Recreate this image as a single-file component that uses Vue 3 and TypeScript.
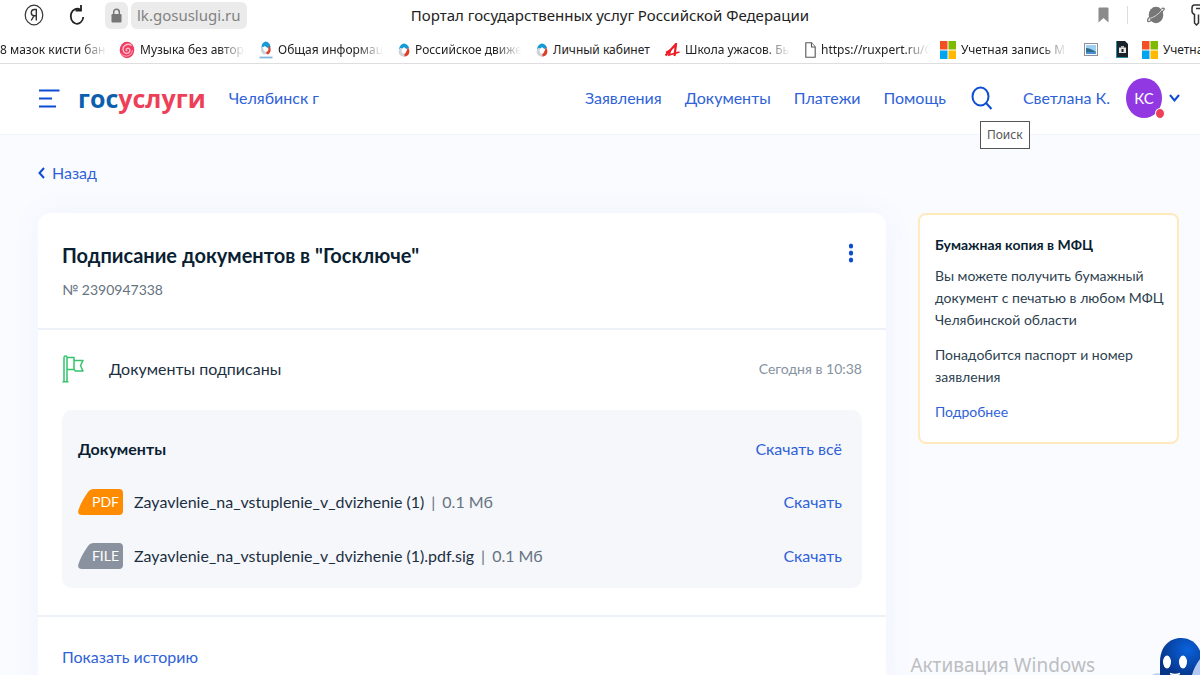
<script setup lang="ts">
interface Bookmark { id: string; icon: string; title: string; width: string; fade: boolean }
interface DocFile { kind: string; name: string; size: string; color: string }

const bookmarks: Bookmark[] = [
  { id: 'b1', icon: '', title: '8 мазок кисти бан', width: 'w1', fade: true },
  { id: 'b2', icon: 'swirl', title: 'Музыка без автор', width: 'w2', fade: true },
  { id: 'b3', icon: 'move', title: 'Общая информац', width: 'w3', fade: true },
  { id: 'b4', icon: 'drop', title: 'Российское движе', width: 'w4', fade: true },
  { id: 'b5', icon: 'drop', title: 'Личный кабинет', width: 'w5', fade: false },
  { id: 'b6', icon: 'four', title: 'Школа ужасов. Бы', width: 'w6', fade: true },
  { id: 'b7', icon: 'page', title: 'https://ruxpert.ru/С', width: 'w7', fade: true },
  { id: 'b8', icon: 'ms', title: 'Учетная запись M', width: 'w8', fade: true },
  { id: 'b9', icon: 'photo', title: '', width: 'w9', fade: false },
  { id: 'b10', icon: 'disk', title: '', width: 'w10', fade: false },
  { id: 'b11', icon: 'ms', title: 'Учетна', width: 'w11', fade: false },
]

const nav: string[] = ['Заявления', 'Документы', 'Платежи', 'Помощь']

const files: DocFile[] = [
  { kind: 'PDF', name: 'Zayavlenie_na_vstuplenie_v_dvizhenie (1)', size: '0.1 Мб', color: '#ff8c00' },
  { kind: 'FILE', name: 'Zayavlenie_na_vstuplenie_v_dvizhenie (1).pdf.sig', size: '0.1 Мб', color: '#8a929f' },
]
</script>

<template>
  <div class="page">
    <header class="browser">
      <div class="toolbar">
        <div class="tools-left">
          <button class="icon-btn ya" aria-label="Яндекс">
            <svg width="20" height="22" viewBox="0 0 20 22" fill="none" stroke="#333">
              <ellipse cx="10" cy="11" rx="8.800" ry="9.800" stroke-width="1.200" />
              <path d="M12.300 16.500V5.500H10.500C8.300 5.500 7.300 7 7.300 8.700C7.300 10.600 8.500 11.800 10.300 11.800H12.300M10 11.800L7.200 16.500" stroke-width="1.400" />
            </svg>
          </button>
          <button class="icon-btn reload" aria-label="Обновить">
            <svg width="16" height="22" viewBox="0 0 16 22" fill="none" stroke="#222" stroke-width="1.800">
              <path d="M11.500 6A6.300 7.500 0 1 0 14.300 13" />
              <path d="M6.500 6.500H12V1" />
            </svg>
          </button>
          <button class="lock" aria-label="Защищённое соединение">
            <svg width="11" height="15" viewBox="0 0 11 15">
              <path d="M2.700 7V4.200a2.800 3 0 0 1 5.600 0V7" fill="none" stroke="#777" stroke-width="1.500" />
              <rect x="0.500" y="6" width="10" height="8.500" rx="1.200" fill="#777" />
            </svg>
          </button>
          <a class="address" href="#">lk.gosuslugi.ru</a>
        </div>
        <div class="tab-title">Портал государственных услуг Российской Федерации</div>
        <div class="tools-right">
          <button class="icon-btn mark" aria-label="В закладки">
            <svg width="11" height="16" viewBox="0 0 11 16"><path d="M0.500 1.500Q0.500 0.500 1.500 0.500H9.500Q10.500 0.500 10.500 1.500V15.500L5.500 11L0.500 15.500Z" fill="#8b8b8b" /></svg>
          </button>
          <span class="rule"></span>
          <button class="icon-btn planet" aria-label="Расширение">
            <svg width="18" height="18" viewBox="0 0 18 18">
              <ellipse cx="9" cy="9" rx="7.300" ry="8.300" fill="#777" />
              <path d="M2 11.500C-0.500 15 0.500 16.200 3 15.200C8 13 14.500 7.500 17 3.500C17.600 2.300 16.500 1.800 14.500 2.600" fill="none" stroke="#777" stroke-width="1.300" />
              <path d="M2.300 12.600C7 11.500 12 8 15 3.800" fill="none" stroke="#d5d5d5" stroke-width="1" />
            </svg>
          </button>
          <button class="icon-btn key" aria-label="Пароли">
            <svg width="9" height="22" viewBox="0 0 9 22" fill="none" stroke="#333" stroke-width="1.500">
              <path d="M9 1H3.500Q1 1 1 4V7Q1 9.500 3.500 10.500V19L5.500 21L7.500 19V10.500" /><path d="M5 4.500H9" />
            </svg>
          </button>
        </div>
      </div>
      <nav class="bookmarks" aria-label="Закладки">
        <a v-for="b in bookmarks" :key="b.id" href="#" class="bookmark" :class="b.width" :aria-label="b.title || b.icon">
          <svg v-if="b.icon === 'swirl'" width="16" height="18" viewBox="0 0 16 18">
            <ellipse cx="8" cy="9" rx="7.300" ry="8.300" fill="#ee3c64" />
            <path d="M12.500 4.500C9 1.800 4 4 4 8.500C4 12 8 13.500 10 11.500C12 9.500 10.500 6.500 8.300 7.300C6.500 8 7 10 8.300 9.800" fill="none" stroke="#ffc3cb" stroke-width="1.300" />
            <path d="M2 12.500C5 17 13 15.500 13.500 9" fill="none" stroke="#ff8f9f" stroke-width="1.200" />
          </svg>
          <svg v-else-if="b.icon === 'move'" width="14" height="18" viewBox="0 0 14 18">
            <path d="M2.500 7Q2 2 6.500 0.500Q11 1 11.500 6L9 8L6 5Z" fill="#189bd7" />
            <path d="M10.500 4Q13.500 11 9 13.500L5.500 12L9 9Z" fill="#d94732" />
            <path d="M3 5Q0 11 5 13.500L8 12L5 9Z" fill="#ccd3db" />
            <circle cx="7" cy="8.500" r="2.300" fill="#fff" />
            <path d="M0.500 16.500H13.500" stroke="#80b8e0" stroke-width="1.800" />
          </svg>
          <svg v-else-if="b.icon === 'drop'" width="12" height="14" viewBox="0 0 12 14">
            <path d="M1 6Q2 1 6 0.500Q10 1 11 5L8 6L6 4L3 7Z" fill="#149bd7" />
            <path d="M10 4Q13 10 9.500 12.500Q7 14 5 13L6.500 10L8.500 8Z" fill="#df3e25" />
            <path d="M2 5Q-1 10 2.500 12.500Q4 13.800 6.500 13L6.500 10L3.500 8L4 5Z" fill="#cfd2d8" />
            <ellipse cx="6" cy="7.800" rx="2.300" ry="2.800" fill="#fff" />
          </svg>
          <svg v-else-if="b.icon === 'four'" width="15" height="14" viewBox="0 0 15 14" fill="none" stroke="#ed1c24">
            <path d="M0.500 12.500L11 1L9.500 13" stroke-width="2.200" /><path d="M1 9.500L5.500 7L4 12L14.500 9" stroke-width="1.800" />
          </svg>
          <svg v-else-if="b.icon === 'page'" width="11" height="16" viewBox="0 0 11 16" fill="#fff" stroke="#555" stroke-width="1.100">
            <path d="M0.800 0.800H6.500L10.200 5V15.200H0.800Z" /><path d="M6.500 0.800V5H10.200" />
          </svg>
          <svg v-else-if="b.icon === 'ms'" width="16" height="18" viewBox="0 0 16 18">
            <rect width="7.500" height="8.500" fill="#f25022" /><rect x="8.500" width="7.500" height="8.500" fill="#7fba00" />
            <rect y="9.500" width="7.500" height="8.500" fill="#00a4ef" /><rect x="8.500" y="9.500" width="7.500" height="8.500" fill="#ffb900" />
          </svg>
          <svg v-else-if="b.icon === 'photo'" width="14" height="13" viewBox="0 0 14 13">
            <rect x="0.500" y="0.500" width="13" height="12" fill="#fff" stroke="#8b9198" />
            <rect x="2" y="2" width="10" height="9" fill="#9fd0f2" /><path d="M2 5Q6 5 12 9V10H2Z" fill="#2d6c8f" /><path d="M2 9H12V11H2Z" fill="#4a8fd0" />
          </svg>
          <svg v-else-if="b.icon === 'disk'" width="12" height="17" viewBox="0 0 12 17">
            <path d="M0 0H9L12 3V17H0Z" fill="#1d2429" /><path d="M0 0H1V16H12V17H0Z" fill="#2a8ba5" />
            <rect x="3" y="6.500" width="7" height="5.500" fill="#e6e6e6" /><rect x="5" y="5" width="3" height="2" fill="#bbb" /><rect x="5.500" y="8" width="2" height="3" fill="#222" />
          </svg>
          <span v-if="b.title" class="bm-title" :class="{ fade: b.fade }">{{ b.title }}</span>
        </a>
      </nav>
    </header>

    <header class="site">
      <button class="icon-btn burger" aria-label="Меню">
        <svg width="21" height="19" viewBox="0 0 21 19" stroke="#0d4cd3" stroke-width="2"><path d="M0 1.500H20.500M0 9.500H13M0 17.500H17" /></svg>
      </button>
      <a class="logo" href="#"><span class="logo-blue">гос</span><span class="logo-red">услуги</span></a>
      <a class="city" href="#">Челябинск г</a>
      <nav class="menu" aria-label="Разделы">
        <a v-for="item in nav" :key="item" href="#">{{ item }}</a>
      </nav>
      <div class="search">
        <button class="icon-btn" aria-label="Поиск">
          <svg width="22" height="24" viewBox="0 0 22 24" fill="none" stroke="#0d4cd3" stroke-width="2">
            <ellipse cx="9.500" cy="10.500" rx="8" ry="9" /><path d="M15 17L20.500 23" />
          </svg>
        </button>
        <span class="tooltip" role="tooltip">Поиск</span>
      </div>
      <a class="user" href="#">Светлана К.</a>
      <button class="profile" aria-label="Профиль">
        <span class="avatar">КС<span class="dot"></span></span>
        <svg width="11" height="8" viewBox="0 0 11 8" fill="none" stroke="#0d4cd3" stroke-width="2"><path d="M1 1L5.500 6.500L10 1" /></svg>
      </button>
    </header>

    <main class="content">
      <a class="back" href="#">
        <svg width="7" height="12" viewBox="0 0 7 12" fill="none" stroke="#0d4cd3" stroke-width="2"><path d="M6 1L1.500 6L6 11" /></svg>
        Назад
      </a>
      <div class="columns">
        <section class="card">
          <div class="card-head">
            <div>
              <h1>Подписание документов в "Госключе"</h1>
              <p class="number">№ 2390947338</p>
            </div>
            <button class="icon-btn more" aria-label="Действия">
              <svg width="6" height="20" viewBox="0 0 6 20" fill="#0d4cd3"><ellipse cx="3" cy="3" rx="2.200" ry="2.500" /><ellipse cx="3" cy="10" rx="2.200" ry="2.500" /><ellipse cx="3" cy="17" rx="2.200" ry="2.500" /></svg>
            </button>
          </div>
          <div class="card-body">
            <div class="status">
              <svg width="22" height="28" viewBox="0 0 22 28" fill="none" stroke="#35c36c" stroke-width="1.500" stroke-linejoin="round">
                <path d="M2 26V2.500Q2 1 3.500 1T5 2.500V26M0.500 26.700H6.500" />
                <path d="M5 2.500H12V14.500H5M12 5.500H21L18.500 10.500L21 16H13.500L12 14.500" />
              </svg>
              <span class="status-name">Документы подписаны</span>
              <time>Сегодня в 10:38</time>
            </div>
            <div class="docs">
              <div class="docs-head"><h2>Документы</h2><a href="#">Скачать всё</a></div>
              <div v-for="f in files" :key="f.name" class="file">
                <span class="badge">
                  <svg width="45" height="26" viewBox="0 0 45 26" :fill="f.color"><path d="M10 3Q12 0 16 0H41Q45 0 45 4V22Q45 26 41 26H4Q-1 26 0.500 21Q3 13 10 3Z" /></svg>
                  <span class="badge-text">{{ f.kind }}</span>
                </span>
                <span class="file-name">{{ f.name }}</span>
                <span class="file-size"><span>|</span><span>{{ f.size }}</span></span>
                <a href="#">Скачать</a>
              </div>
            </div>
          </div>
          <div class="card-foot"><a href="#">Показать историю</a></div>
        </section>
        <aside class="note">
          <h3>Бумажная копия в МФЦ</h3>
          <p>Вы можете получить бумажный документ с печатью в любом МФЦ Челябинской области</p>
          <p>Понадобится паспорт и номер заявления</p>
          <a href="#">Подробнее</a>
        </aside>
      </div>
    </main>
    <div class="watermark">Активация Windows</div>
    <button class="robot" aria-label="Робот Макс">
      <svg width="48" height="38" viewBox="0 0 48 38">
        <defs><radialGradient id="robotSkin" cx="0.650" cy="0.300" r="0.700"><stop offset="0" stop-color="#0a62dc" /><stop offset="1" stop-color="#063488" /></radialGradient></defs>
        <path d="M0 38Q4 35 10 37V38H0Z" fill="#b9cdf3" />
        <path d="M8 40V25C8 10 17 1 29 1C41 1 50 10 50 25V40Z" fill="url(#robotSkin)" />
        <path d="M48 22Q42 30 40 38H48Z" fill="#b3c9f4" />
        <ellipse cx="15" cy="25" rx="4" ry="6.500" fill="#fff" /><ellipse cx="31" cy="25" rx="4" ry="6.500" fill="#fff" />
        <path d="M18 36.500Q23 38.500 28 36.500" stroke="#fff" stroke-width="1.500" fill="none" />
      </svg>
    </button>
  </div>
</template>

<style>
body { background: #fafbff; }
html, body { overflow: hidden; }
</style>

<style scoped>
.page { position: relative; height: 100vh; overflow: hidden; background: #fafbff; color: #0b1f33; font-family: Lato, "Open Sans", sans-serif; font-size: 16px; line-height: 24px; }
* { box-sizing: border-box; }
a { color: #2f62d9; text-decoration: none; white-space: nowrap; }
h1, h2, h3, p { margin: 0; }
svg { display: block; flex: none; }
button { border: 0; background: none; padding: 0; font: inherit; cursor: pointer; }
.icon-btn { display: flex; align-items: center; }

.browser { background: #fff; border-bottom: 1px solid #dedede; font-family: "Noto Sans", "Open Sans", sans-serif; color: #222; }
.toolbar { display: grid; grid-template-columns: 1fr auto 1fr; align-items: center; height: 30px; }
.tools-left { display: flex; align-items: center; padding-left: 24px; }
.reload { margin-left: 25px; }
.lock { display: flex; align-items: center; justify-content: center; width: 23px; height: 27px; margin-left: 20px; border-radius: 6px; background: #ebebeb; }
.address { margin-left: 3px; padding: 0 6px; height: 27px; line-height: 27px; border-radius: 6px; background: #ebebeb; color: #828282; font-size: 15px; }
.tab-title { padding-left: 20px; font-size: 15px; white-space: nowrap; }
.tools-right { display: flex; align-items: center; justify-content: flex-end; }
.rule { width: 1px; height: 18px; margin: 0 19px 0 18px; background: #ddd; }
.key { margin-left: 26px; }
.bookmarks { display: flex; align-items: center; height: 33px; padding-top: 6px; overflow: hidden; }
.bookmark { display: flex; align-items: center; gap: 5px; flex: none; color: #222; font-size: 12px; line-height: 20px; }
.bm-title { overflow: hidden; flex: 1; }
.fade { -webkit-mask-image: linear-gradient(90deg, #000 calc(100% - 26px), transparent); mask-image: linear-gradient(90deg, #000 calc(100% - 26px), transparent); }
.w1 { width: 107px; margin-right: 12px; }
.w2 { width: 126px; margin-right: 14px; }
.w3 { width: 124px; margin-right: 15px; }
.w4 { width: 123px; margin-right: 15px; }
.w5 { width: 117px; margin-right: 12px; }
.w6 { width: 125px; margin-right: 15px; }
.w7 { width: 124px; margin-right: 11px; }
.w8 { width: 127px; margin-right: 17px; }
.w9 { width: 14px; margin-right: 18px; }
.w10 { width: 12px; margin-right: 14px; }

.site { display: flex; align-items: center; height: 71px; padding: 0 20px 2px 39px; background: #fff; border-bottom: 1px solid #f1f4fb; }
.logo { margin-left: 18px; font-family: "Open Sans", sans-serif; font-weight: 700; font-size: 25px; line-height: 32px; }
.logo-blue { color: #0d5fae; }
.logo-red { color: #ee3f58; }
.city { margin-left: 23px; }
.menu { display: flex; gap: 23px; margin-left: auto; }
.search { position: relative; margin-left: 25px; }
.tooltip { position: absolute; left: 9px; top: 35px; padding: 0 6px; border: 1px solid #555; background: #fff; color: #555; font: 12px/26px "Noto Sans", sans-serif; white-space: nowrap; }
.user { margin-left: 30px; }
.profile { display: flex; align-items: center; gap: 7px; margin-left: 16px; }
.avatar { position: relative; width: 36px; height: 40px; border-radius: 50%; background: #9238e3; color: #fff; font-size: 15px; line-height: 40px; }
.dot { position: absolute; right: -3px; bottom: -1px; width: 10px; height: 11px; border: 1px solid #fff; border-radius: 50%; background: #ee3f58; }

.content { padding: 26px 21px 0 38px; }
.back { display: inline-flex; align-items: center; gap: 7px; }
.columns { display: grid; grid-template-columns: minmax(0, 848fr) minmax(0, 261fr); gap: 32px; align-items: start; margin-top: 28px; }
.card { background: #fff; border-radius: 12px 12px 0 0; box-shadow: 0 0 32px rgba(40, 90, 220, 0.05); }
.card-head { display: flex; justify-content: space-between; padding: 28px 32px 26px 24px; border-bottom: 2px solid #edf1f8; }
h1 { font-size: 20px; line-height: 28px; font-weight: 700; }
.number { margin-top: 9px; color: #66727f; font-size: 14px; }
.more { height: 24px; }
.card-body { padding: 23px 24px 27px; }
.status { display: flex; align-items: center; height: 32px; }
.status-name { margin-left: 25px; color: #1c2f42; }
time { margin-left: auto; color: #8592a0; font-size: 14px; }
.docs { margin-top: 25px; padding: 27px 20px 5px 16px; border-radius: 10px; background: #f5f7fb; }
.docs-head { display: flex; justify-content: space-between; margin-bottom: 14px; }
h2 { font-size: 16px; line-height: 24px; font-weight: 700; }
.file { display: flex; align-items: center; height: 54px; color: #1c2f42; }
.badge { position: relative; margin-right: 11px; }
.badge-text { position: absolute; right: 4px; top: 0; color: #fff; line-height: 26px; font-size: 14px; }
.file a { margin-left: auto; }
.file-size { display: flex; gap: 7px; margin-left: 7px; color: #66727f; }
.card-foot { padding: 28px 24px; border-top: 2px solid #edf1f8; }
.note { padding: 19px 6px 19px 15px; border: 2px solid #ffe9bd; border-radius: 8px; background: #fff; font-size: 14px; line-height: 22px; }
.note h3 { margin-bottom: 9px; font-size: 14px; line-height: 22px; font-weight: 700; }
.note p { margin-bottom: 13px; color: #2d3f50; }
.watermark { position: absolute; right: 105px; bottom: -3px; color: #bcbec1; font: 19px/26px "Noto Sans", sans-serif; }
.robot { position: absolute; right: 0; bottom: 0; }
</style>
